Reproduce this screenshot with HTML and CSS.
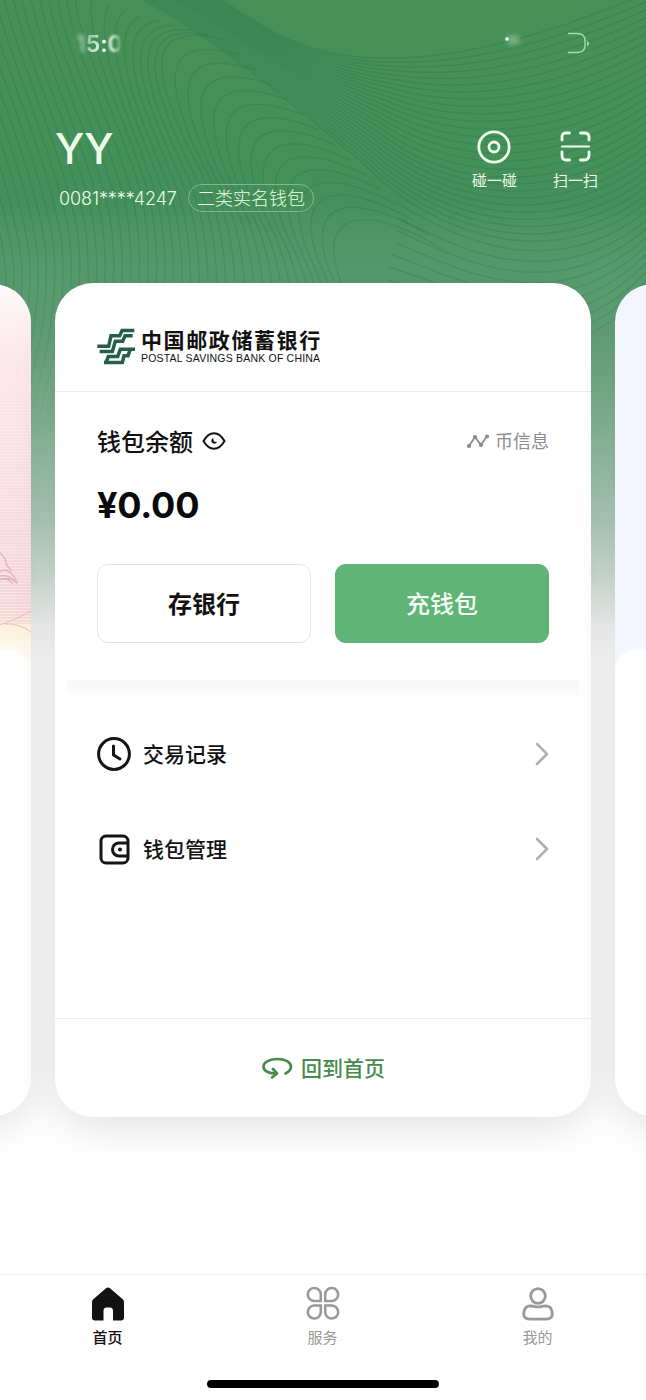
FILE: index.html
```html
<!DOCTYPE html>
<html lang="zh-CN">
<head>
<meta charset="utf-8">
<title>数字钱包</title>
<link rel="stylesheet" href="styles.css">
</head>
<body>
<div class="screen">
  <svg class="backdrop" id="backdrop" viewBox="0 0 646 640" aria-hidden="true"></svg>

  <div class="status">
    <div class="clock"><span class="faded">1</span><span class="five">5</span><span>:</span><span class="smudge">0</span></div>
    <svg class="indicators" width="126" height="28" viewBox="0 0 126 28">
      <ellipse class="glow" cx="45" cy="10" rx="6" ry="3"/>
      <circle cx="39" cy="9" r="1.8" fill="#fff"/>
      <path d="M100 3.500h9q8 0 8 7v5q0 7-8 7h-9" fill="none" stroke="#a5dcae" stroke-width="1.400"/>
      <path d="M119 10.500l2.500 3-2.500 3z" fill="#a5dcae"/>
    </svg>
  </div>

  <header class="hero">
    <div class="user">
      <h1 class="name">YY</h1>
      <div class="account"><span class="number">0081****4247</span><span class="level">二类实名钱包</span></div>
    </div>
    <div class="actions">
      <div class="action">
        <svg width="34" height="34" viewBox="0 0 34 34" fill="none" stroke="#edffe9" stroke-width="2.8"><circle cx="17" cy="17" r="15.2"/><circle cx="17" cy="17" r="5"/></svg>
        <span>碰一碰</span>
      </div>
      <div class="action">
        <svg width="34" height="34" viewBox="0 0 34 34" fill="none" stroke="#edffe9" stroke-width="2.8" stroke-linecap="round"><path d="M4 10V7q0-4 4-4h3.500M22.500 3H26q5 0 5 4v3M31 22v3q0 5-5 5h-3.500M11.500 30H8q-4 0-4-5v-3"/><path d="M4 16.500h27" stroke-width="2.200"/></svg>
        <span>扫一扫</span>
      </div>
    </div>
  </header>

  <main class="carousel">
    <section class="card side pink">
      <svg class="banknote" width="536" height="366" viewBox="0 0 536 366" fill="none">
        <defs><pattern id="hatch" width="3" height="3" patternUnits="userSpaceOnUse"><path d="M0 1H3" stroke="#e9b9c3" stroke-width=".7"/></pattern>
        <linearGradient id="fadeDown" x1="0" y1="0" x2="0" y2="1"><stop offset=".15" stop-color="#000"/><stop offset="1" stop-color="#fff"/></linearGradient><mask id="hatchMask"><rect width="536" height="366" fill="url(#fadeDown)"/></mask></defs>
        <rect width="536" height="340" fill="url(#hatch)" mask="url(#hatchMask)"/>
        <path d="M504 268q6 5 7 10t6 9M504 288q7-4 12 1t6 10q-6-6-18-4M504 296q8-3 14 4M504 292q9-2 16 5" stroke="#dba0b0" stroke-width="1.300" opacity=".7"/>
        <path d="M504 341q12-3 32-14M510 340q14-1 26 8" stroke="#e3b4bd" stroke-width=".8"/>
      </svg>
      <div class="sheet"></div>
    </section>

    <section class="card side blue"><div class="sheet"></div></section>

    <section class="card wallet">
      <div class="bank">
        <svg class="emblem" width="38" height="37" viewBox="50 54 114 110" fill="none" stroke="#245f4c" stroke-width="10.500">
          <path d="M162 61H125L118 77H92L85 108H51"/>
          <path d="M157 77H134L127 93H105L96 124H58"/>
          <path d="M165 117H120L112 139H84L77 157"/>
          <path d="M150 117L143 137H131L126 157H71"/>
        </svg>
        <div class="bank-name"><strong>中国邮政储蓄银行</strong><span>POSTAL SAVINGS BANK OF CHINA</span></div>
      </div>

      <div class="balance">
        <div class="balance-head">
          <div class="label"><span>钱包余额</span>
            <svg width="24" height="20" viewBox="0 0 24 20" fill="none" stroke="#151515" stroke-width="2"><path d="M1.500 10Q6 2.200 12 2.200T22.500 10Q18 17.800 12 17.800T1.500 10Z"/><path d="M11 7a3 3 0 1 0 4 4l-3-.5z" fill="#151515" stroke="none"/></svg>
          </div>
          <div class="coin">
            <svg width="24" height="16" viewBox="0 0 24 16" fill="#8c8c8c" stroke="#8c8c8c" stroke-width="1.800"><path d="M3 13L9 4L15 12L21 3" fill="none"/><circle cx="3" cy="13" r="1.200"/><circle cx="9" cy="4" r="1.200"/><circle cx="15" cy="12" r="1.200"/><circle cx="21" cy="3.500" r="1.200"/></svg>
            <span>币信息</span>
          </div>
        </div>
        <div class="amount">¥0.00</div>
        <div class="buttons"><button class="btn outline">存银行</button><button class="btn solid">充钱包</button></div>
      </div>

      <div class="menu">
        <div class="row">
          <svg width="34" height="34" viewBox="0 0 34 34" fill="none" stroke="#151515" stroke-width="3" stroke-linecap="round" stroke-linejoin="round"><circle cx="17" cy="17" r="15.400"/><path d="M16.500 9v9l6.500 4"/></svg>
          <span>交易记录</span>
          <svg class="chevron" width="16" height="26" viewBox="0 0 16 26"><path d="M3 3l10 10L3 23"/></svg>
        </div>
        <div class="row">
          <svg width="34" height="34" viewBox="0 0 34 34" fill="none" stroke="#151515" stroke-width="3" stroke-linejoin="round"><rect x="4" y="4" width="27" height="27" rx="5"/><path d="M31 11H22a6.500 6.500 0 0 0 0 13h9"/><circle cx="23" cy="17.500" r="2" fill="#151515" stroke="none"/></svg>
          <span>钱包管理</span>
          <svg class="chevron" width="16" height="26" viewBox="0 0 16 26"><path d="M3 3l10 10L3 23"/></svg>
        </div>
      </div>

      <div class="back-home">
        <svg width="32" height="24" viewBox="0 0 32 24" fill="none" stroke="#468b4c" stroke-width="2.700" stroke-linecap="round" stroke-linejoin="round"><path d="M24.500 17.500C28.500 15.500 30 13.500 30 10.800C30 6 24 3 16.500 3S2.500 6 2.500 10.800C2.500 15 8 17.500 15 17.500M12 13l4 4.500-5 4"/></svg>
        <span>回到首页</span>
      </div>
    </section>
  </main>

  <nav class="tabbar">
    <div class="tab active">
      <svg width="36" height="36" viewBox="0 0 36 36"><path d="M18 2.500Q19 2.500 20 3.300L33 14.500Q34 15.500 34 17V32.500Q34 35.500 31 35.500H23V26Q23 22.500 20 22.500H16.500Q13.500 22.500 13.500 26V35.500H5Q2 35.500 2 32.500V17Q2 15.500 3 14.500L16 3.300Q17 2.500 18 2.500Z" fill="#121212"/></svg>
      <span>首页</span>
    </div>
    <div class="tab">
      <svg width="36" height="36" viewBox="0 0 36 36" fill="none" stroke="#999" stroke-width="2.600"><path d="M15.800 16H9a6.500 6.500 0 1 1 6.800-6.500ZM20.200 16H27a6.500 6.500 0 1 0-6.800-6.500ZM15.800 20.500H9a6.500 6.500 0 1 0 6.800 6.500ZM20.200 20.500H27a6.500 6.500 0 1 1-6.800 6.500Z"/></svg>
      <span>服务</span>
    </div>
    <div class="tab">
      <svg width="36" height="36" viewBox="0 0 36 36" fill="none" stroke="#999" stroke-width="2.800"><circle cx="18" cy="11" r="7.300"/><path d="M10 20.800Q13 20.800 14 21.300Q18 22.500 22 21.300Q23 20.800 26 20.800Q32 21 32.300 29Q32.600 34 25 34.200H11Q3.400 34 3.700 29Q4 21 10 20.800Z"/></svg>
      <span>我的</span>
    </div>
  </nav>
  <div class="home-indicator"></div>
</div>
<script src="waves.js"></script>
</body>
</html>
```

FILE: waves.js
```js
// Fills the header backdrop with guilloche lines, blended between key curves.
const svg = document.getElementById('backdrop');

function blend(a, b, t) {
  return a.map((v, i) => v + (b[i] - v) * t);
}

function addFamily(keys, steps) {
  for (let k = 0; k < keys.length - 1; k++) {
    for (let s = 0; s < steps[k]; s++) {
      const p = blend(keys[k], keys[k + 1], s / steps[k]).map(v => v.toFixed(1));
      const path = document.createElementNS('http://www.w3.org/2000/svg', 'path');
      path.setAttribute('d', `M${p.slice(0, 2)}C${p.slice(2, 8)} ${p.slice(8, 14)}`);
      path.setAttribute('class', 'wave');
      svg.appendChild(path);
    }
  }
}

addFamily([
  [215, -5, 280, 40, 320, 61, 400, 58, 480, 55, 560, 30, 660, -12],
  [165, -5, 240, 35, 310, 90, 375, 130, 450, 190, 560, 200, 660, 120],
  [140, 0, 220, 45, 290, 105, 365, 170, 430, 240, 560, 290, 660, 200]
], [17, 10]);

addFamily([
  [-95, -5, -70, 70, -20, 180, -10, 280, -10, 340, -30, 380, -40, 430],
  [75, -5, 80, 50, 120, 120, 140, 190, 155, 250, 150, 330, 120, 430],
  [225, 40, 130, 15, 160, 95, 200, 170, 235, 240, 230, 330, 210, 430],
  [460, 265, 365, 205, 320, 230, 360, 310, 375, 350, 370, 390, 350, 430]
], [19, 9, 15]);

addFamily([
  [400, 205, 460, 240, 560, 290, 660, 200, 660, 200, 660, 200, 660, 200],
  [380, 330, 450, 330, 560, 420, 660, 280, 660, 280, 660, 280, 660, 280]
], [10]);
```

FILE: styles.css
```css
* { box-sizing: border-box; }
body { margin: 0; background: #fff; font-family: "Noto Sans CJK SC", sans-serif; color: #111; }
svg { display: block; flex: none; }
.screen {
  position: relative; width: 646px; height: 1400px; overflow: hidden;
  display: flex; flex-direction: column;
  background: linear-gradient(#479158 0, #45905a 200px, #549a6b 265px, #65a67b 330px, #85b997 420px, #b1cebc 520px, #d9e6dd 585px, #f6f7f6 625px, #fff 660px);
}
.backdrop { position: absolute; top: 0; left: 0; width: 646px; height: 640px; -webkit-mask-image: linear-gradient(#000 220px, transparent 430px); mask-image: linear-gradient(#000 220px, transparent 430px); }
.wave { fill: none; stroke: #2a764f; stroke-width: 1.4; opacity: .34; }

.status { position: relative; height: 120px; padding: 30px 52px 0 76px; display: flex; justify-content: space-between; }
.clock { font: 600 23px/28px Inter, sans-serif; color: #effff0; display: flex; }
.faded { filter: blur(2px); opacity: .5; }
.five { -webkit-mask-image: linear-gradient(110deg, rgba(0, 0, 0, .5) 15%, #000 50%); mask-image: linear-gradient(110deg, rgba(0, 0, 0, .5) 15%, #000 50%); }
.smudge { filter: blur(1px); opacity: .85; -webkit-mask-image: linear-gradient(90deg, #000 35%, transparent 95%); mask-image: linear-gradient(90deg, #000 35%, transparent 95%); }
.glow { fill: #d7efd9; filter: blur(3px); opacity: .7; }

.hero { position: relative; height: 163px; display: flex; justify-content: space-between; padding: 0 48px 0 55px; color: #edffe9; }
.name { margin: 0; padding-top: 4px; font: 500 42px/50px Inter, sans-serif; }
.account { display: flex; align-items: center; gap: 11px; margin-top: 9px; padding-left: 4px; }
.number { padding-top: 2px; font: 300 18px/28px Inter, sans-serif; letter-spacing: -.1px; width: 118px; white-space: nowrap; }
.level { height: 28px; padding: 0 8px; border: 1px solid #7fb889; border-radius: 14px; font-size: 18px; line-height: 25px; font-weight: 300; }
.actions { display: flex; gap: 36px; padding-top: 10px; }
.action { display: flex; flex-direction: column; align-items: center; gap: 5px; font-size: 15px; line-height: 22px; }

.carousel { position: relative; display: flex; gap: 24px; width: 1656px; height: 834px; margin-left: -505px; align-items: center; }
.card { width: 536px; height: 834px; border-radius: 38px; background: #fff; box-shadow: 0 8px 44px rgba(0, 0, 0, .13); overflow: hidden; }
.side { height: 832px; }
.pink { background: linear-gradient(#fffafa 0, #fde9ec 70px, #fbe4e8 320px, #fdf2dc 345px, #fffaf0 368px); }
.blue { order: 3; background: #f3f6fe; }
.banknote { height: 366px; }
.sheet { height: 466px; background: #fff; border-radius: 38px 22px 0 0; box-shadow: 0 0 6px #fff; }
.blue .sheet { margin-top: 366px; border-radius: 22px 38px 0 0; }

.wallet { order: 2; display: flex; flex-direction: column; }
.bank { height: 109px; flex: none; padding: 43px 42px 0; display: flex; align-items: flex-start; gap: 6px; border-bottom: 1px solid #ededed; }
.bank-name { display: flex; flex-direction: column; }
.bank-name strong { font-size: 21px; line-height: 26px; letter-spacing: 1.6px; font-weight: 700; white-space: nowrap; }
.bank-name span { margin-top: 1px; font: 10.5px/10px "Liberation Sans", sans-serif; letter-spacing: .2px; white-space: nowrap; }
.emblem { margin-top: 2px; }

.balance { height: 288px; flex: none; padding: 31px 42px 0; }
.balance-head { height: 36px; display: flex; align-items: center; justify-content: space-between; }
.label { display: flex; align-items: center; gap: 9px; font-size: 24px; font-weight: 500; }
.label span, .coin span, .row span, .back-home span { padding-bottom: 2px; }
.coin { display: flex; align-items: center; gap: 5px; font-size: 18px; color: #8c8c8c; }
.amount { margin-top: 18px; height: 56px; font: 700 36px/56px Inter, sans-serif; letter-spacing: -.2px; color: #0a0a0a; }
.buttons { display: flex; gap: 24px; margin-top: 31px; }
.btn { width: 214px; height: 79px; border: 0; border-radius: 11px; padding: 0 0 2px; font: 500 24px "Noto Sans CJK SC", sans-serif; background: #fff; color: #111; }
.outline { border: 1px solid #e3e3e3; font-weight: 700; }
.solid { background: #60b477; color: #f2fff2; }

.menu { height: 338px; flex: none; padding: 26px 42px 0 42px; background: linear-gradient(#f8f8f8, #fafafa 8px, #fefefe 14px, #fff 20px) no-repeat center top / 512px 100%; }
.row { height: 95px; display: flex; align-items: center; gap: 12px; font-size: 21px; font-weight: 500; }
.chevron { margin-left: auto; margin-right: -1px; fill: none; stroke: #b0b0b0; stroke-width: 2.6; stroke-linecap: round; stroke-linejoin: round; }
.back-home { flex: 1; display: flex; align-items: center; justify-content: center; gap: 8px; border-top: 1px solid #ededed; font-size: 21px; font-weight: 500; color: #468b4c; }

.tabbar { position: relative; margin-top: 157px; height: 106px; flex: none; border-top: 1px solid #f0f0f0; display: flex; padding: 10px 1px 0 0; }
.tab { flex: 1; display: flex; flex-direction: column; align-items: center; gap: 5px; font-size: 15px; line-height: 22px; color: #999; }
.active { color: #111; font-weight: 500; }
.home-indicator { width: 232px; height: 8px; margin: 0 auto; border-radius: 4px; background: #000; flex: none; }
```
